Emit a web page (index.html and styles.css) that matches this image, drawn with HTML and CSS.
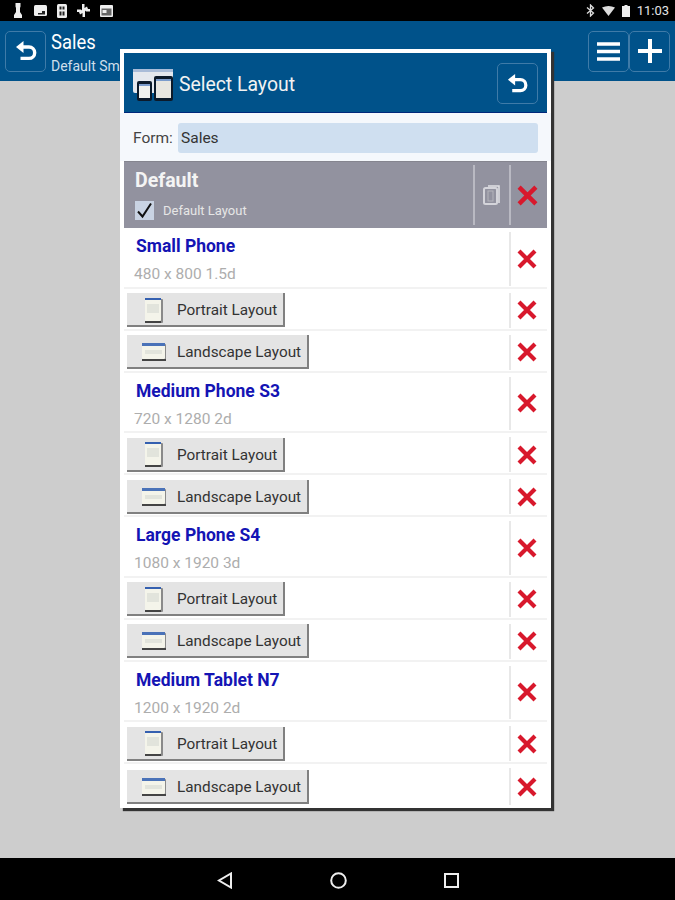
FILE: index.html
```html
<!DOCTYPE html>
<html lang="en">

<head>
    <meta charset="UTF-8">
    <title>Select Layout</title>
    <link rel="stylesheet" href="styles.css">
</head>

<body>
    <svg class="defs" width="0" height="0">
        <symbol id="back" viewBox="0 0 24 24">
            <path d="M9.500 2 2 8l7.500 6z" fill="#fff"/>
            <path d="M8 8h7a5.700 5.700 0 0 1 0 11.400H6.500" fill="none" stroke="#fff" stroke-width="3.400"/>
        </symbol>
        <symbol id="cross" viewBox="0 0 20 20">
            <path d="M2 2 18 18M18 2 2 18" stroke="#d8182c" stroke-width="4.200"/>
        </symbol>
        <symbol id="portrait" viewBox="0 0 18 25">
            <rect x="2" y="1" width="16" height="24" rx="1" fill="#8a8a8a"/>
            <rect x="0" y="0" width="16" height="23" rx="1" fill="#f4f4ea"/>
            <rect x="0" y="0" width="16" height="2" fill="#3560b0"/>
            <rect x="2" y="6" width="12" height="9" fill="#e2e4dc"/>
            <rect x="0" y="23" width="16" height="2" fill="#444"/>
        </symbol>
        <symbol id="landscape" viewBox="0 0 24 18">
            <rect x="1" y="1" width="23" height="17" rx="1" fill="#8a8a8a"/>
            <rect x="0" y="0" width="23" height="16" rx="1" fill="#f4f4ea"/>
            <rect x="0" y="0" width="23" height="3" fill="#4a72b8"/>
            <rect x="3" y="7" width="17" height="4" fill="#e2e4dc"/>
            <rect x="0" y="16" width="24" height="2" fill="#444"/>
        </symbol>
    </svg>

    <div class="screen">
        <div class="status">
            <div class="status-left">
                <svg width="12" height="15" viewBox="0 0 12 15"><path d="M3.500 0h5v3.500L8 5v4l2 3v3H2v-3l2-3V5l-.5-1.500z" fill="#eee"/></svg>
                <svg width="13" height="13" viewBox="0 0 13 13"><rect y="1" width="13" height="11" rx="1.500" fill="#eee"/><path d="M4 9h7v1.500H4zM8 7h3v2H8z" fill="#222"/></svg>
                <svg width="10" height="14" viewBox="0 0 10 14"><rect width="10" height="14" rx="1.500" fill="#eee"/><path d="M2.500 2.500h2v3h-2zM5.500 2.500h2v3h-2zM2.500 7.500h2v4h-2zM5.500 7.500h2v4h-2z" fill="#222"/></svg>
                <svg width="13" height="13" viewBox="0 0 13 13"><path d="M5 0h2.500v4L10 2.500 11 5h2v2.500H9L8 6.500V13H5.500V9L3 10.500 2 8H0V5.500h4l1 1z" fill="#eee"/></svg>
                <svg width="13" height="12" viewBox="0 0 13 12"><rect width="13" height="12" rx="1" fill="#eee"/><path d="M1.500 3.500h10v7h-10z" fill="#666"/><path d="M2.500 5h4v3h-4z" fill="#eee"/></svg>
            </div>
            <div class="status-right">
                <svg width="9" height="13" viewBox="0 0 9 13"><path d="M1 3.500 7.500 9 4.500 12V1l3 3L1 9.500" fill="none" stroke="#ddd" stroke-width="1.300"/></svg>
                <svg width="13" height="10" viewBox="0 0 13 10"><path d="M0 1.500Q6.500-1.500 13 1.500L6.500 10z" fill="#ddd"/></svg>
                <svg width="8" height="12" viewBox="0 0 8 12"><path d="M2.500 0h3v1H8v11H0V1h2.500z" fill="#eee"/></svg>
                <span class="clock">11:03</span>
            </div>
        </div>

        <div class="appbar">
            <div class="icon-btn"><svg width="24" height="24"><use href="#back"/></svg></div>
            <div class="appbar-title">
                <div class="appbar-name">Sales</div>
                <div class="appbar-sub">Default Small Phone</div>
            </div>
            <div class="appbar-actions">
                <div class="icon-btn">
                    <svg width="23" height="19" viewBox="0 0 23 19"><path d="M0 2h23M0 9.500h23M0 17h23" stroke="#fff" stroke-width="3.400"/></svg>
                </div>
                <div class="icon-btn">
                    <svg width="24" height="24" viewBox="0 0 24 24"><path d="M12 0v24M0 12h24" stroke="#fff" stroke-width="4"/></svg>
                </div>
            </div>
        </div>

        <div class="content"></div>

        <div class="navbar">
            <svg width="16" height="17" viewBox="0 0 16 17"><path d="M14 1.500v14L2 8.500z" fill="none" stroke="#eee" stroke-width="2"/></svg>
            <svg width="17" height="17" viewBox="0 0 17 17"><circle cx="8.500" cy="8.500" r="7.300" fill="none" stroke="#eee" stroke-width="2"/></svg>
            <svg width="15" height="15" viewBox="0 0 15 15"><rect x="1" y="1" width="13" height="13" fill="none" stroke="#eee" stroke-width="2"/></svg>
        </div>
    </div>

    <div class="dialog">
        <div class="dialog-head">
            <svg class="dialog-logo" width="42" height="34" viewBox="0 0 42 34">
                <rect x="0" y="1" width="40" height="24" rx="2" fill="#e4e8ee"/>
                <rect x="0" y="1" width="40" height="3" fill="#a9bcd8"/>
                <rect x="4" y="13" width="15" height="20" rx="2" fill="#0c1a2a"/>
                <rect x="6" y="16" width="11" height="14" fill="#f0f1ee"/>
                <rect x="6" y="16" width="11" height="2" fill="#7c9ccc"/>
                <rect x="21" y="8" width="19" height="25" rx="2" fill="#0c1a2a"/>
                <rect x="23" y="11" width="15" height="19" fill="#e8e6e0"/>
                <rect x="23" y="11" width="15" height="2" fill="#7c9ccc"/>
            </svg>
            <div class="dialog-title">Select Layout</div>
            <div class="icon-btn"><svg width="23" height="23"><use href="#back"/></svg></div>
        </div>

        <div class="form-row">
            <span class="form-label">Form:</span>
            <div class="form-input">Sales</div>
        </div>

        <div class="default-row">
            <div class="default-info">
                <div class="default-name">Default</div>
                <div class="default-check">
                    <span class="checkbox">
                        <svg width="17" height="17" viewBox="0 0 17 17"><path d="M2 9.500 6.500 14.500 15 1.500" fill="none" stroke="#111" stroke-width="2"/></svg>
                    </span>
                    <span>Default Layout</span>
                </div>
            </div>
            <div class="default-copy">
                <svg width="18" height="22" viewBox="0 0 18 22"><rect x="1" y="4" width="13" height="16" rx="1.500" fill="none" stroke="#d4d4da" stroke-width="2"/><path d="M5 2h11v17" fill="none" stroke="#e2e2e6" stroke-width="1.500"/><rect x="5" y="7" width="5" height="10" fill="none" stroke="#b4b4bc"/></svg>
            </div>
            <div class="del"><svg width="21" height="21"><use href="#cross"/></svg></div>
        </div>

        <div class="row row-head">
            <div class="device">
                <div class="device-name">Small Phone</div>
                <div class="device-size">480 x 800 1.5d</div>
            </div>
            <div class="del"><svg width="20" height="20"><use href="#cross"/></svg></div>
        </div>
        <div class="row">
            <div class="row-main"><div class="layout-btn"><span class="btn-icon"><svg width="18" height="25"><use href="#portrait"/></svg></span>Portrait Layout</div></div>
            <div class="del"><svg width="20" height="20"><use href="#cross"/></svg></div>
        </div>
        <div class="row">
            <div class="row-main"><div class="layout-btn"><span class="btn-icon"><svg width="24" height="18"><use href="#landscape"/></svg></span>Landscape Layout</div></div>
            <div class="del"><svg width="20" height="20"><use href="#cross"/></svg></div>
        </div>

        <div class="row row-head">
            <div class="device">
                <div class="device-name">Medium Phone S3</div>
                <div class="device-size">720 x 1280 2d</div>
            </div>
            <div class="del"><svg width="20" height="20"><use href="#cross"/></svg></div>
        </div>
        <div class="row">
            <div class="row-main"><div class="layout-btn"><span class="btn-icon"><svg width="18" height="25"><use href="#portrait"/></svg></span>Portrait Layout</div></div>
            <div class="del"><svg width="20" height="20"><use href="#cross"/></svg></div>
        </div>
        <div class="row">
            <div class="row-main"><div class="layout-btn"><span class="btn-icon"><svg width="24" height="18"><use href="#landscape"/></svg></span>Landscape Layout</div></div>
            <div class="del"><svg width="20" height="20"><use href="#cross"/></svg></div>
        </div>

        <div class="row row-head">
            <div class="device">
                <div class="device-name">Large Phone S4</div>
                <div class="device-size">1080 x 1920 3d</div>
            </div>
            <div class="del"><svg width="20" height="20"><use href="#cross"/></svg></div>
        </div>
        <div class="row">
            <div class="row-main"><div class="layout-btn"><span class="btn-icon"><svg width="18" height="25"><use href="#portrait"/></svg></span>Portrait Layout</div></div>
            <div class="del"><svg width="20" height="20"><use href="#cross"/></svg></div>
        </div>
        <div class="row">
            <div class="row-main"><div class="layout-btn"><span class="btn-icon"><svg width="24" height="18"><use href="#landscape"/></svg></span>Landscape Layout</div></div>
            <div class="del"><svg width="20" height="20"><use href="#cross"/></svg></div>
        </div>

        <div class="row row-head">
            <div class="device">
                <div class="device-name">Medium Tablet N7</div>
                <div class="device-size">1200 x 1920 2d</div>
            </div>
            <div class="del"><svg width="20" height="20"><use href="#cross"/></svg></div>
        </div>
        <div class="row">
            <div class="row-main"><div class="layout-btn"><span class="btn-icon"><svg width="18" height="25"><use href="#portrait"/></svg></span>Portrait Layout</div></div>
            <div class="del"><svg width="20" height="20"><use href="#cross"/></svg></div>
        </div>
        <div class="row row-last">
            <div class="row-main"><div class="layout-btn"><span class="btn-icon"><svg width="24" height="18"><use href="#landscape"/></svg></span>Landscape Layout</div></div>
            <div class="del"><svg width="20" height="20"><use href="#cross"/></svg></div>
        </div>
    </div>
</body>

</html>
```

FILE: styles.css
```css
* {
    margin: 0;
    padding: 0;
    box-sizing: border-box;
}

body {
    width: 675px;
    height: 900px;
    overflow: hidden;
    font-family: Roboto, "Liberation Sans", sans-serif;
    position: relative;
}

.defs {
    position: absolute;
}

.screen {
    height: 900px;
    display: flex;
    flex-direction: column;
}

.status {
    height: 21px;
    background-color: #000;
    display: flex;
    justify-content: space-between;
    align-items: center;
    padding: 0 6px 0 12px;
}

.status-left {
    display: flex;
    align-items: center;
    gap: 10px;
}

.status-right {
    display: flex;
    align-items: center;
    gap: 7px;
}

.clock {
    color: #e4e4e4;
    font-size: 13px;
}

.appbar {
    height: 60px;
    background-color: #00528a;
    display: flex;
    align-items: center;
    padding: 0 5px 0 5px;
}

.icon-btn {
    width: 41px;
    height: 41px;
    border: 1px solid #3f7ba8;
    border-radius: 5px;
    display: flex;
    align-items: center;
    justify-content: center;
    flex-shrink: 0;
}

.appbar-title {
    flex: 1;
    padding-left: 5px;
    color: #fff;
}

.appbar-name {
    font-size: 20px;
    line-height: 26px;
    margin-top: 2px;
    transform: scaleX(0.92);
    transform-origin: left;
}

.appbar-sub {
    font-size: 14px;
    line-height: 20px;
    margin-top: 1px;
    color: #cfdfea;
}

.appbar-actions {
    display: flex;
}

.content {
    flex: 1;
    background-color: #cdcdcd;
}

.navbar {
    height: 42px;
    background-color: #000;
    display: flex;
    align-items: center;
    padding: 2px 216px 0 217px;
    justify-content: space-between;
}

/* dialog */
.dialog {
    position: absolute;
    left: 120px;
    top: 49px;
    width: 431px;
    height: 759px;
    background-color: #fff;
    border: 4px solid #fff;
    box-shadow: 3px 3px 1px #333;
}

.dialog-head {
    height: 60px;
    background-color: #00528a;
    border-bottom: 1px solid #00287a;
    display: flex;
    align-items: center;
    padding: 1px 9px 0 9px;
}

.dialog-logo {
    flex-shrink: 0;
    margin-top: 3px;
}

.dialog-title {
    flex: 1;
    color: #f2f2f2;
    font-size: 20px;
    padding-left: 4px;
    margin-top: 1px;
    transform: scaleX(0.97);
    transform-origin: left;
}

.form-row {
    height: 48px;
    background-color: #f5f8fc;
    display: flex;
    align-items: center;
    margin: 0 -4px;
    padding: 1px 13px 0;
    width: 431px;
}

.form-label {
    width: 45px;
    font-size: 15.500px;
    color: #444;
}

.form-input {
    flex: 1;
    height: 30px;
    line-height: 30px;
    background-color: #cfdff0;
    border-radius: 3px;
    padding-left: 3px;
    font-size: 15.500px;
    color: #333;
}

.default-row {
    height: 67px;
    background-color: #92929f;
    border-top: 1px solid #85858f;
    display: flex;
    align-items: stretch;
    padding: 3px 0;
}

.default-info {
    flex: 1;
    padding-left: 11px;
    color: #fff;
}

.default-name {
    font-size: 19.500px;
    font-weight: bold;
    line-height: 24px;
    margin-top: 4px;
    color: #f4f4f4;
}

.default-check {
    display: flex;
    align-items: center;
    gap: 9px;
    margin-top: 8px;
    font-size: 13px;
    color: #e6e6e6;
}

.checkbox {
    width: 19px;
    height: 19px;
    background-color: #c9d3e3;
    display: flex;
    align-items: center;
    justify-content: center;
}

.default-copy {
    width: 36px;
    border-left: 2px solid #b9b9c2;
    display: flex;
    align-items: center;
    justify-content: center;
}

.del {
    width: 38px;
    border-left: 2px solid #e8e8e8;
    margin-left: auto;
    padding-right: 4px;
    display: flex;
    align-items: center;
    justify-content: center;
    flex-shrink: 0;
}

.default-row .del {
    border-left-color: #b9b9c2;
}

.row {
    height: 42px;
    display: flex;
    align-items: stretch;
    padding: 4px 0 1px;
    border-bottom: 2px solid #f2f2f2;
}

.row-head {
    height: 60.500px;
}

.row-last {
    border-bottom: 0;
}

.row-main {
    flex: 1;
    display: flex;
    align-items: center;
    padding-left: 3px;
}

.device {
    flex: 1;
}

.device-name {
    font-size: 17.500px;
    font-weight: bold;
    color: #1414b4;
    line-height: 22px;
    padding-left: 12px;
    margin-top: 3px;
}

.device-size {
    font-size: 15.500px;
    color: #adadad;
    line-height: 20px;
    padding-left: 10px;
    margin-top: 7px;
}

.layout-btn {
    height: 34px;
    display: flex;
    align-items: center;
    background-color: #e4e4e4;
    border-right: 2px solid #808080;
    border-bottom: 2px solid #808080;
    font-size: 15.300px;
    color: #333;
    padding: 2px 6px 0 0;
}

.btn-icon {
    width: 50px;
    display: flex;
    align-items: center;
    justify-content: center;
    padding-left: 4px;
}
```
